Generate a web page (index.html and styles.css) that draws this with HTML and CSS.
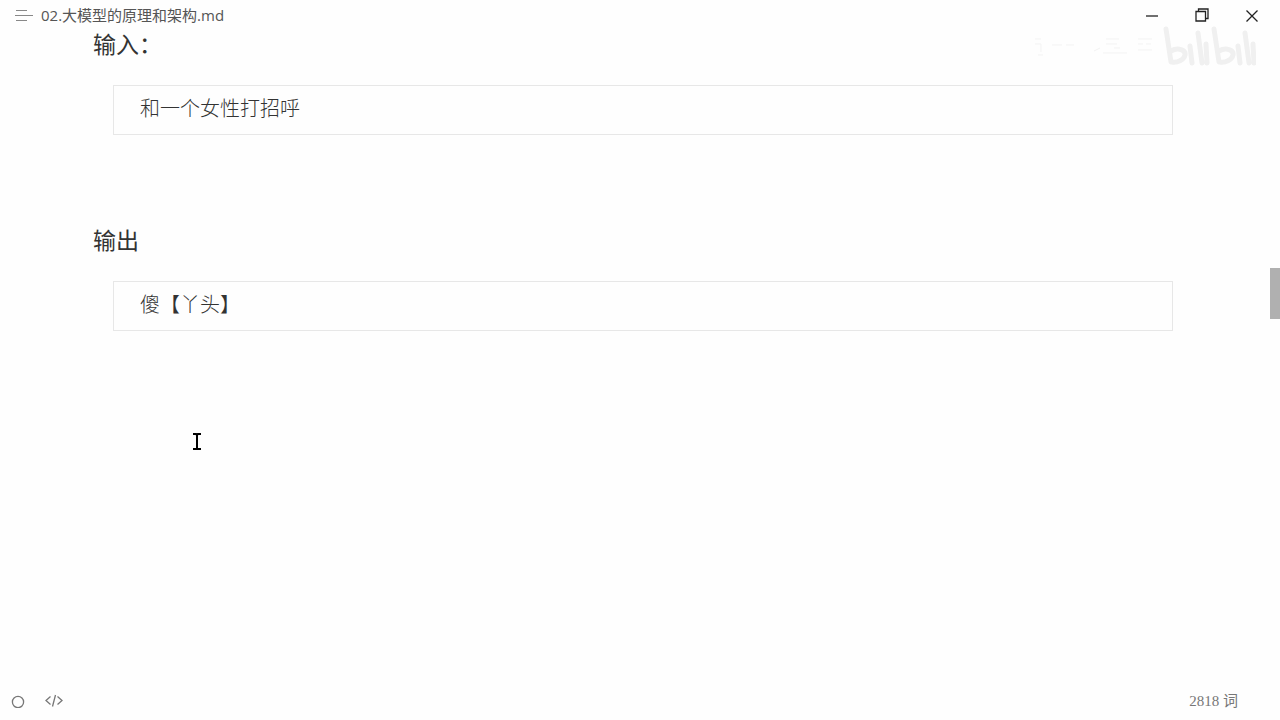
FILE: index.html
```html
<!DOCTYPE html>
<html lang="zh-CN">
<head>
  <meta charset="UTF-8" />
  <meta name="viewport" content="width=device-width, initial-scale=1.0"/>
  <title>02.大模型的原理和架构.md</title>
  <link rel="stylesheet" href="styles.css">
</head>
<body>
  <header class="titlebar">
    <button class="menu-btn" aria-label="菜单">
      <svg width="18" height="12" viewBox="0 0 18 12"><path d="M1 1.500h11M0 6.500h18M1 11.500h11" /></svg>
    </button>
    <span class="filename">02.大模型的原理和架构.md</span>
    <div class="window-controls">
      <button aria-label="最小化">
        <svg width="14" height="14" viewBox="0 0 14 14"><path d="M1 8h12" /></svg>
      </button>
      <button aria-label="还原">
        <svg width="14" height="14" viewBox="0 0 14 14"><path d="M1 3.500h9.500v9.500h-9.500zM3.500 3.500v-2.500h9.500v9.500h-2.500" /></svg>
      </button>
      <button aria-label="关闭">
        <svg width="14" height="14" viewBox="0 0 14 14"><path d="M1.500 2.500l11 11M12.500 2.500l-11 11" /></svg>
      </button>
    </div>
  </header>

  <main class="document">
    <h2>输入：</h2>
    <pre>和一个女性打招呼</pre>
    <h2>输出</h2>
    <pre>傻【丫头】</pre>
  </main>

  <footer class="statusbar">
    <button aria-label="侧边栏">
      <svg width="14" height="14" viewBox="0 0 14 14"><circle cx="7" cy="8" r="5.600" /></svg>
    </button>
    <button aria-label="源代码模式">
      <svg width="18" height="14" viewBox="0 0 18 14"><path d="M5.500 2.500L1 6.500l4.500 4M12.500 2.500l4.500 4-4.500 4M10.500 1L7.500 12.500" /></svg>
    </button>
    <span class="word-count">2818 词</span>
  </footer>

  <div class="scroll-thumb"></div>

  <div class="watermark">
    <svg width="128" height="24" viewBox="0 0 128 24" class="marks">
      <path d="M7 4h6M7 9h6M13 9v8M10 20h5M24 10h10M38 10h8M66 16l6-3M78 4h13M78 9h11M75 18h24M86 13h6M110 4h14M110 9h5M118 9h5M110 15h14" />
    </svg>
    <svg width="94" height="42" viewBox="0 0 94 42" class="logo">
      <path d="M4 3l5 33M9 25c7-4 15-1 14 4-1 5-8 8-13 7M28 20l2 17M36 7l4 30M44 18l1 19M52 3l5 33M57 25c7-4 15-1 14 4-1 5-8 8-13 7M76 20l2 17M83 7l4 30M91 18l1 19" />
    </svg>
  </div>

  <svg class="text-cursor" width="10" height="20" viewBox="0 0 10 20"><path d="M1 2h3l1 1 1-1h3M1 17h3l1-1 1 1h3M5 3v13" /></svg>
</body>
</html>
```
FILE: styles.css
```css
* {
  box-sizing: border-box;
}

body {
  margin: 0;
  min-height: 100vh;
  display: flex;
  flex-direction: column;
  position: relative;
  background: #fefefe;
  color: #333;
  font-family: "Open Sans", "Noto Sans CJK SC", sans-serif;
}

button {
  display: flex;
  align-items: center;
  justify-content: center;
  padding: 0;
  border: none;
  background: none;
  color: inherit;
}

svg {
  display: block;
  fill: none;
  stroke: currentColor;
}

.titlebar {
  display: flex;
  align-items: center;
  height: 29px;
  padding-left: 15px;
}

.menu-btn {
  margin-right: 8px;
  color: #888;
}

.filename {
  font-size: 15px;
  line-height: 28px;
  color: #555;
}

.window-controls {
  display: flex;
  margin-left: auto;
  padding-right: 3px;
}

.window-controls button {
  width: 50px;
  height: 28px;
  color: #222;
}

.window-controls svg {
  stroke-width: 1.3;
}

.document {
  flex: 1;
  padding: 0 107px 0 93px;
}

h2 {
  margin: 0 0 25px;
  font-size: 23px;
  font-weight: 400;
  line-height: 31px;
}

pre {
  margin: 0 0 90px 20px;
  padding: 8px 26px;
  height: 50px;
  border: 1px solid #e7e7e7;
  font-family: "Liberation Serif", "Noto Sans CJK SC", serif;
  font-size: 20px;
  font-weight: 300;
  line-height: 30px;
}

.statusbar {
  display: flex;
  align-items: center;
  gap: 20px;
  height: 38px;
  padding: 0 42px 0 11px;
  color: #777;
}

.statusbar svg {
  stroke-width: 1.3;
}

.word-count {
  margin-left: auto;
  font-family: "Liberation Serif", "Noto Sans CJK SC", serif;
  font-size: 15px;
  line-height: 20px;
}

.scroll-thumb {
  position: absolute;
  top: 268px;
  right: 0;
  width: 10px;
  height: 51px;
  background: #b0b0b0;
}

.watermark {
  position: absolute;
  top: 26px;
  right: 24px;
  display: flex;
  align-items: center;
  gap: 6px;
}

.marks {
  color: #f3f3f3;
}

.logo {
  color: #f0f0f0;
  stroke-width: 5;
  stroke-linecap: round;
}

.text-cursor {
  position: absolute;
  top: 432px;
  left: 192px;
  color: #000;
  stroke-width: 2;
}
```
